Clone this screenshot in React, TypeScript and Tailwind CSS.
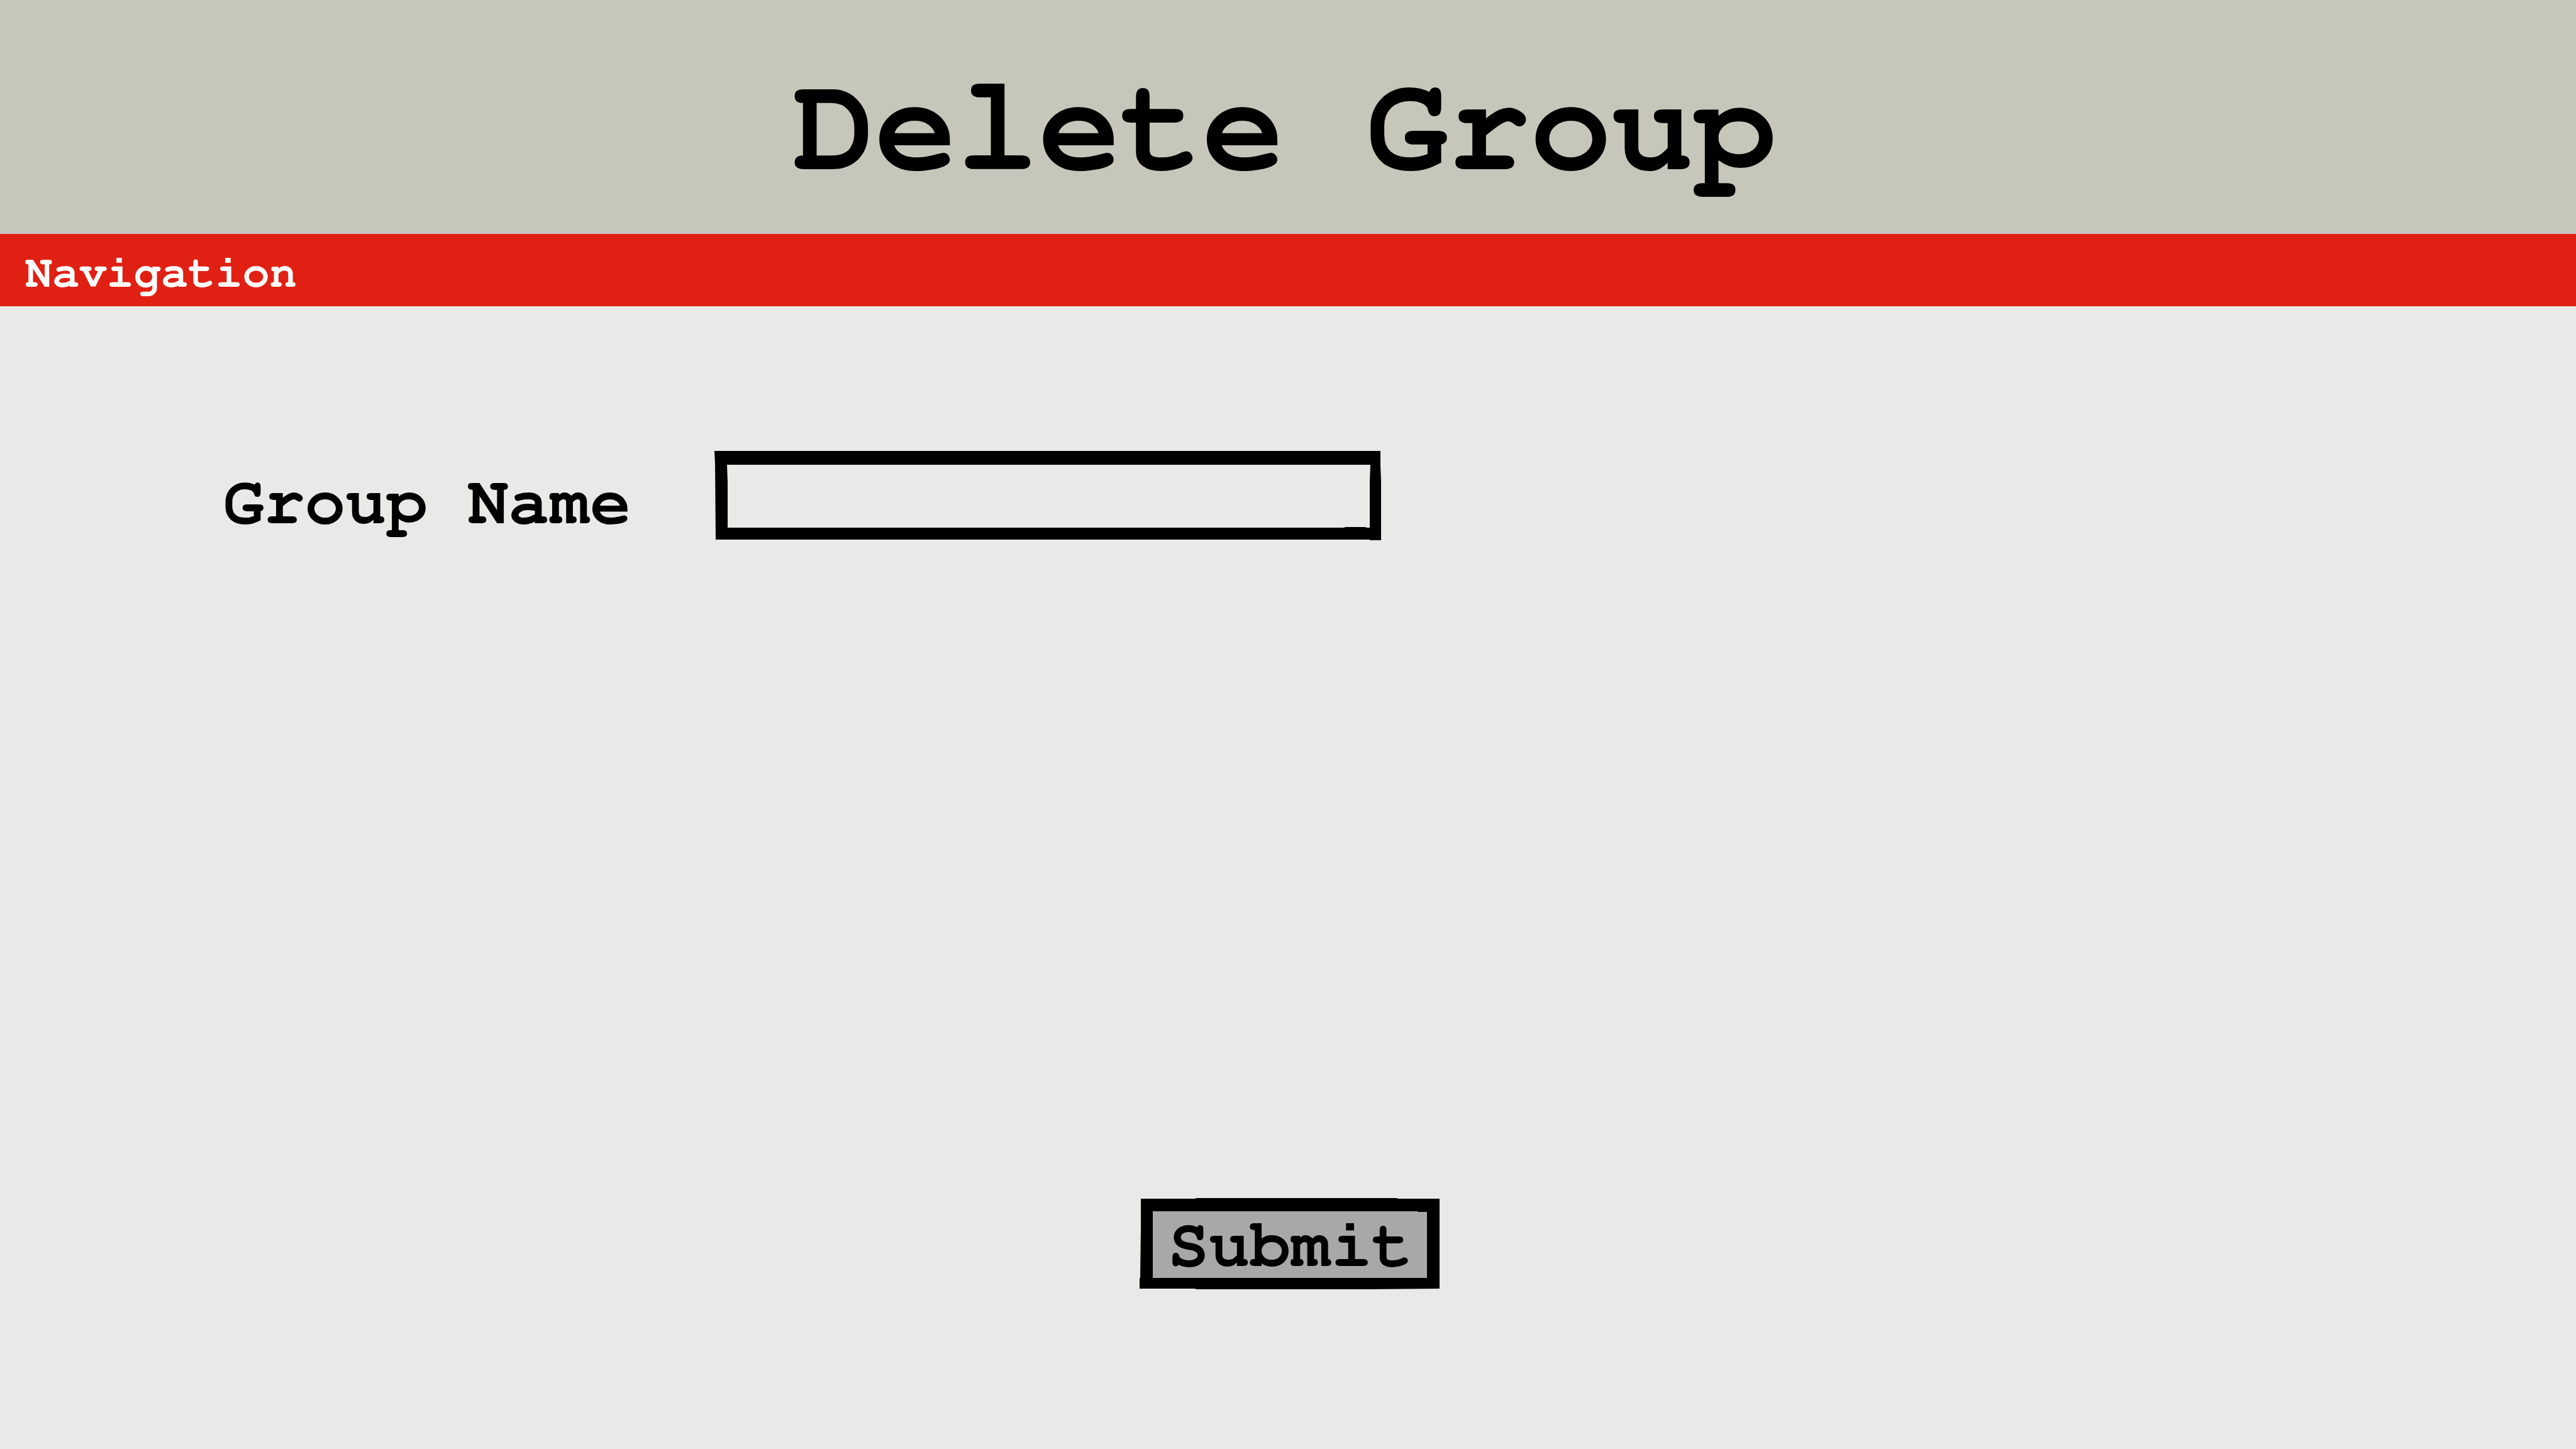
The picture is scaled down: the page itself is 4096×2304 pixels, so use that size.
import React from "react";

function FieldFrame() {
  return (
    <svg
      aria-hidden="true"
      className="pointer-events-none absolute inset-0 h-full w-full"
      viewBox="0 0 1060 142"
      preserveAspectRatio="none"
    >
      <path
        fillRule="evenodd"
        d="M0 0H1059V22L1060 50V142H1042V141H2L1 22ZM20 22L21 50V122H1000L1004 121H1034L1038 122H1042V50L1043 22Z"
      />
    </svg>
  );
}

function ButtonFrame() {
  return (
    <svg
      aria-hidden="true"
      className="pointer-events-none absolute inset-0 h-full w-full"
      viewBox="0 0 477 146"
      preserveAspectRatio="none"
    >
      <path d="M10 10H467V136H10Z" fill="#a8a8a8" />
      <path
        fillRule="evenodd"
        d="M2 2H89V1H408L412 2H477V145L363 146H89V145H0V128H1L2 50ZM21 22V128H457V23H442V22Z"
      />
    </svg>
  );
}

export default function App() {
  return (
    <div className="flex min-h-screen flex-col bg-[#e9e9e7] font-['FreeMono','Liberation_Mono',monospace] font-bold text-black">
      <header className="flex h-[372px] items-center justify-center bg-[#c7c6ba] pt-[34px] pr-3">
        <h1 className="text-[217px] leading-none">Delete Group</h1>
      </header>
      <nav className="flex h-[115px] items-center bg-[#e12014] px-10 pt-2">
        <a href="#navigation" className="text-[72px] leading-none text-white">
          Navigation
        </a>
      </nav>
      <form
        className="flex flex-1 flex-col justify-between pt-[230px] pb-[254px]"
        onSubmit={(event) => event.preventDefault()}
      >
        <div className="flex items-center pl-[355px]">
          <label htmlFor="group-name" className="w-[781px] pt-6 text-[108px] leading-none whitespace-nowrap">
            Group Name
          </label>
          <div className="relative h-[142px] w-[1060px]">
            <FieldFrame />
            <input
              id="group-name"
              type="text"
              className="relative h-full w-full bg-transparent px-10 text-[80px] outline-none"
            />
          </div>
        </div>
        <button
          type="submit"
          className="relative ml-1 flex h-[146px] w-[477px] items-center justify-center self-center pt-2 pl-1 text-[108px] leading-none"
        >
          <ButtonFrame />
          <span className="relative">Submit</span>
        </button>
      </form>
    </div>
  );
}
